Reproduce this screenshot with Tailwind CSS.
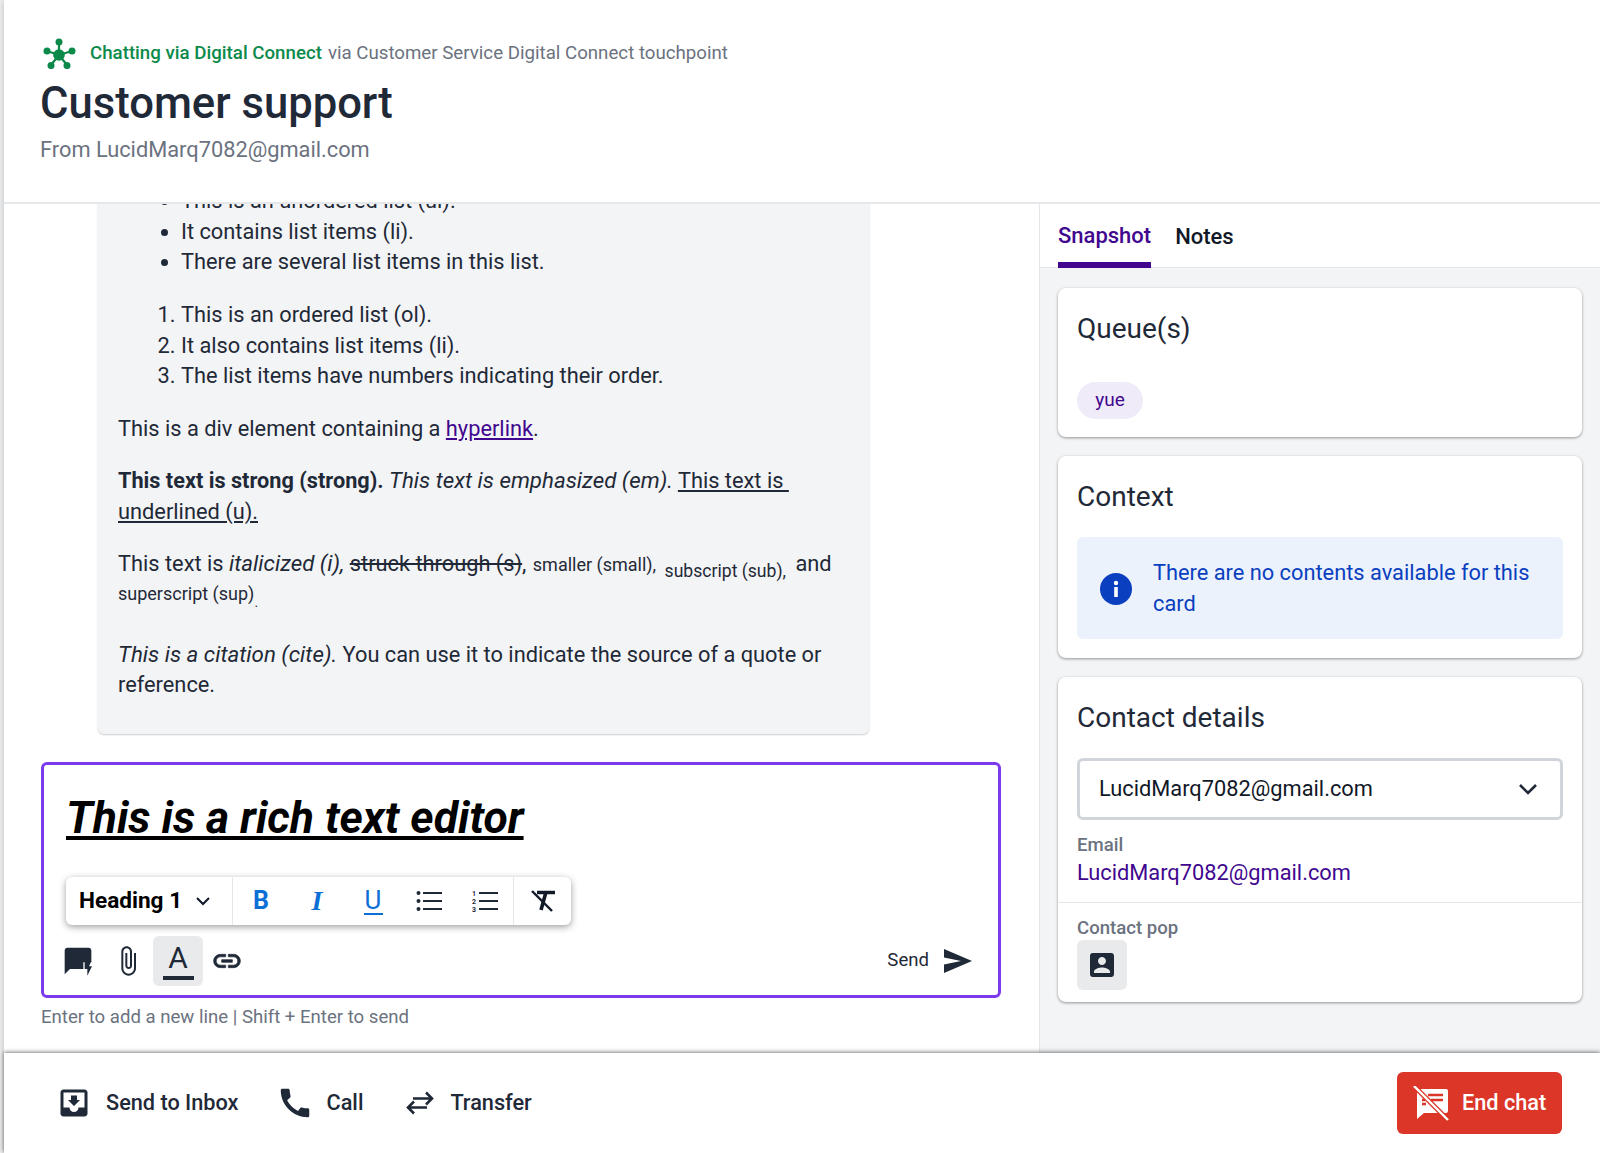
<!DOCTYPE html>
<html lang="en">
<head>
<meta charset="utf-8">
<title>Customer support</title>
<script src="https://cdn.jsdelivr.net/npm/@tailwindcss/browser@4"></script>
</head>
<body class="font-['Roboto',sans-serif] text-[#1f2937] bg-white">
<div class="w-[1600px] h-[1153px] overflow-hidden flex bg-[#f3f4f6]">
  <div class="w-[4px] shrink-0"></div>
  <div class="flex-1 min-w-0 flex flex-col bg-white shadow-[-2px_0_6px_rgba(0,0,0,0.16)]">
    <!-- Header -->
    <header class="h-[204px] shrink-0 border-b-2 border-[#e5e7eb] pl-[36px] pt-[38px]">
      <div class="h-[30px] flex items-center text-[18.7px]">
        <svg class="w-[34px] h-[32px] mr-[14px] ml-[2px] mt-[2px]" viewBox="0 0 34 32" fill="#0b8a4a" stroke="#0b8a4a">
          <g stroke-width="2.2"><path d="M17 17 L17 4 M17 17 L5 13 M17 17 L30 13 M17 17 L9 27 M17 17 L25 27"/></g>
          <g stroke="none"><circle cx="17" cy="17" r="5.8"/><circle cx="17" cy="4" r="3.5"/><circle cx="5" cy="13" r="3.5"/><circle cx="30" cy="13" r="3.5"/><circle cx="9" cy="27.5" r="3.5"/><circle cx="25" cy="27.5" r="3.5"/></g>
        </svg>
        <span class="text-[#0b8a4a] font-medium">Chatting via Digital Connect</span>
        <span class="text-[#6b7280] ml-[6px]">via Customer Service Digital Connect touchpoint</span>
      </div>
      <h1 class="mt-[10px] text-[43.6px] leading-[52px] font-medium">Customer support</h1>
      <p class="mt-[4px] text-[21.8px] leading-[32px] text-[#6b7280]">From LucidMarq7082@gmail.com</p>
    </header>

    <!-- Middle -->
    <div class="flex-1 min-h-0 flex">
      <!-- Conversation -->
      <div class="w-[1035px] shrink-0 min-h-0 overflow-hidden flex flex-col justify-end pl-[37px] pr-[38px] pb-[24px]">
        <div class="shrink-0 ml-[57px] w-[771px] bg-[#f3f4f6] rounded-b-md shadow-[0_1px_2px_rgba(0,0,0,0.2)] pl-[20px] pr-[20px] pb-[33px] text-[21.8px] leading-[30.6px]">
          <ul class="list-disc pl-[63px]">
            <li>This is an unordered list (ul).</li>
            <li>It contains list items (li).</li>
            <li>There are several list items in this list.</li>
          </ul>
          <ol class="list-decimal pl-[63px] mt-[22px]">
            <li>This is an ordered list (ol).</li>
            <li>It also contains list items (li).</li>
            <li>The list items have numbers indicating their order.</li>
          </ol>
          <p class="mt-[22px]">This is a div element containing a <a class="text-[#41078f] underline">hyperlink</a>.</p>
          <p class="mt-[21px]"><strong class="font-bold text-[21.7px]">This text is strong (strong).</strong> <em class="text-[22.3px]">This text is emphasized (em).</em> <u>This text is&nbsp;</u> <u>underlined (u).</u></p>
          <p class="mt-[20px]">This text is <i class="text-[22.3px]">italicized (i),</i> <s>struck through (s)</s>, <small class="text-[18px] ml-[1px]">smaller (small),</small> <sub class="text-[17.6px] bottom-[-6px] ml-[3px]">subscript (sub),</sub> <span class="ml-[4px]">and</span> <sup class="text-[18px] top-[-2px]">superscript (sup)</sup><span class="relative top-[5px] text-[14px]">.</span></p>
          <p class="mt-[26px]"><cite class="italic text-[22.3px]">This is a citation (cite).</cite> You can use it to indicate the source of a quote or reference.</p>
        </div>

        <!-- Editor -->
        <div class="shrink-0 mt-[28px] h-[236px] w-[960px] rounded-md border-[3px] border-[#7c3aed] flex flex-col">
          <div class="h-[112px] shrink-0 pl-[22px] pb-[6px] flex items-center">
            <span class="text-[44.5px] leading-[52px] font-bold italic underline text-black">This is a rich text editor</span>
          </div>
          <div class="ml-[22px] h-[48px] w-[505px] shrink-0 flex items-center rounded-md bg-white shadow-[0_2px_7px_rgba(0,0,0,0.38)]">
            <div class="w-[167px] h-full shrink-0 flex items-center pl-[13px] pb-[1px] border-r border-[#e5e7eb] text-[22.6px] font-bold text-black">
              <span>Heading 1</span>
              <svg class="w-[18px] h-[18px] ml-[12px]" viewBox="0 0 18 18" fill="none" stroke="#111827" stroke-width="2"><path d="M3 6l6 6 6-6"/></svg>
            </div>
            <div class="w-[56px] h-full flex items-center justify-center text-[25px] font-bold text-[#0b6fd6]">B</div>
            <div class="w-[56px] h-full flex items-center justify-center font-['Liberation_Serif',serif] text-[28px] font-bold italic text-[#0b6fd6]">I</div>
            <div class="w-[56px] h-full flex flex-col items-center justify-center text-[#0b6fd6]">
              <span class="text-[26px] leading-[24px]">U</span>
              <span class="w-[19px] h-[2px] mt-[1px] bg-[#0b6fd6]"></span>
            </div>
            <div class="w-[56px] h-full flex items-center justify-center">
              <svg class="w-[26px] h-[22px]" viewBox="0 0 26 22" fill="#1f2937"><circle cx="2.5" cy="3" r="2"/><circle cx="2.5" cy="11" r="2"/><circle cx="2.5" cy="19" r="2"/><rect x="7" y="2" width="19" height="2"/><rect x="7" y="10" width="19" height="2"/><rect x="7" y="18" width="19" height="2"/></svg>
            </div>
            <div class="w-[56px] h-full flex items-center justify-center">
              <svg class="w-[26px] h-[24px]" viewBox="0 0 26 24" fill="#1f2937"><text x="0" y="6.5" font-size="7" font-weight="700" font-family="Roboto">1</text><text x="0" y="14.5" font-size="7" font-weight="700" font-family="Roboto">2</text><text x="0" y="22.5" font-size="7" font-weight="700" font-family="Roboto">3</text><rect x="7" y="3" width="19" height="2"/><rect x="7" y="11" width="19" height="2"/><rect x="7" y="19" width="19" height="2"/></svg>
            </div>
            <div class="flex-1 h-full flex items-center justify-center border-l border-[#e5e7eb]">
              <svg class="w-[26px] h-[24px]" viewBox="0 0 26 24" fill="none" stroke="#111827"><path d="M7 3.5h18" stroke-width="3.5"/><path d="M16 3 L11 21" stroke-width="3.6"/><path d="M2 2 L22 22" stroke-width="2.4"/></svg>
            </div>
          </div>
          <div class="mt-[11px] h-[50px] shrink-0 flex items-center pl-[9px] pr-[26px]">
            <div class="w-[50px] h-[50px] flex items-center justify-center">
              <svg class="w-[32px] h-[32px]" viewBox="0 0 24 24" fill="#1f2937"><path d="M22 4c0-1.1-.9-2-2-2H4c-1.1 0-1.99.9-1.99 2L2 22l4-4h10v-5h6V4z"/><path d="M22.5 16h-2.2l1.7-4h-5v6h2v5z"/></svg>
            </div>
            <div class="w-[50px] h-[50px] flex items-center justify-center">
              <svg class="w-[32px] h-[32px]" viewBox="0 0 24 24" fill="#1f2937"><path d="M16.5 6v11.5c0 2.21-1.79 4-4 4s-4-1.79-4-4V5c0-1.38 1.12-2.5 2.5-2.5s2.5 1.12 2.5 2.5v10.5c0 .55-.45 1-1 1s-1-.45-1-1V6H10v9.5c0 1.38 1.12 2.5 2.5 2.5s2.5-1.12 2.5-2.5V5c0-2.21-1.79-4-4-4S7 2.79 7 5v12.5c0 3.04 2.46 5.5 5.5 5.5s5.5-2.46 5.5-5.5V6h-1.5z"/></svg>
            </div>
            <div class="w-[50px] h-[50px] flex flex-col items-center justify-center rounded-md bg-[#e9eaec]">
              <span class="text-[30px] leading-[30px]">A</span>
              <span class="w-[31px] h-[4px] mt-[3px] bg-[#1f2937]"></span>
            </div>
            <div class="w-[50px] h-[50px] -ml-[1px] flex items-center justify-center">
              <svg class="w-[32px] h-[32px]" viewBox="0 0 24 24" fill="#1f2937" stroke="#1f2937" stroke-width="0.5"><path d="M3.9 12c0-1.71 1.39-3.1 3.1-3.1h4V7H7c-2.76 0-5 2.24-5 5s2.24 5 5 5h4v-1.9H7c-1.71 0-3.1-1.39-3.1-3.1zM8 13h8v-2H8v2zm9-6h-4v1.9h4c1.71 0 3.1 1.39 3.1 3.1s-1.39 3.1-3.1 3.1h-4V17h4c2.76 0 5-2.24 5-5s-2.24-5-5-5z"/></svg>
            </div>
            <div class="ml-auto flex items-center text-[18.6px]">
              <span>Send</span>
              <svg class="w-[28px] h-[24px] ml-[15px]" viewBox="0 0 28 24" fill="#1f2937"><path d="M0 0 L28 12 L0 24 L0 15.5 L17 12 L0 8.5z"/></svg>
            </div>
          </div>
        </div>
        <p class="shrink-0 mt-[7px] text-[18.6px] leading-[24px] text-[#6b7280]">Enter to add a new line | Shift + Enter to send</p>
      </div>

      <!-- Right panel -->
      <aside class="flex-1 min-w-0 bg-[#f3f4f6] border-l border-[#e5e7eb]">
        <div class="h-[64px] bg-white border-b border-[#e5e7eb] flex pl-[18px] gap-[24px] text-[22px] font-medium">
          <div class="h-[64px] border-b-[6px] border-[#41078f] text-[#41078f] flex items-center pt-[4px]">Snapshot</div>
          <div class="h-[64px] flex items-center text-[#111827]">Notes</div>
        </div>
        <div class="ml-[18px] mr-[18px] mt-[20px] flex flex-col gap-[19px]">
          <section class="h-[149px] bg-white rounded-lg shadow-[0_1px_3px_rgba(0,0,0,0.4)] px-[19px] pt-[21px]">
            <h2 class="text-[28px] leading-[40px]">Queue(s)</h2>
            <span class="mt-[33px] flex items-center justify-center w-[66px] h-[37px] rounded-full bg-[#f0ebf8] text-[#41078f] text-[19px]">yue</span>
          </section>
          <section class="h-[202px] bg-white rounded-lg shadow-[0_1px_3px_rgba(0,0,0,0.4)] px-[19px] pt-[21px]">
            <h2 class="text-[28px] leading-[40px]">Context</h2>
            <div class="mt-[20px] h-[102px] rounded-md bg-[#ecf2fb] flex items-center pl-[23px] pr-[20px] gap-[21px] text-[#0a3fbf] text-[21.8px] leading-[31px]">
              <svg class="w-[32px] h-[32px] shrink-0 mt-[1px]" viewBox="0 0 32 32"><circle cx="16" cy="16" r="16" fill="#0a3fbf"/><rect x="14.2" y="14" width="3.6" height="10" fill="#fff"/><circle cx="16" cy="10" r="2.2" fill="#fff"/></svg>
              <p>There are no contents available for this card</p>
            </div>
          </section>
          <section class="h-[325px] bg-white rounded-lg shadow-[0_1px_3px_rgba(0,0,0,0.4)]">
            <div class="px-[19px] pt-[21px] pb-[14px] border-b border-[#e5e7eb]">
              <h2 class="text-[28px] leading-[40px]">Contact details</h2>
              <div class="mt-[20px] h-[62px] rounded-md border-[3px] border-[#d1d5db] flex items-center pl-[19px] pr-[22px] text-[21.8px] text-[#111827]">
                <span>LucidMarq7082@gmail.com</span>
                <svg class="ml-auto w-[20px] h-[20px]" viewBox="0 0 20 20" fill="none" stroke="#1f2937" stroke-width="2.6"><path d="M2 6l8 8 8-8"/></svg>
              </div>
              <p class="mt-[13px] text-[18.6px] leading-[24px] font-medium text-[#6b7280]">Email</p>
              <a class="block mt-[1px] text-[21.8px] leading-[30px] text-[#41078f]">LucidMarq7082@gmail.com</a>
            </div>
            <div class="px-[19px] pt-[13px]">
              <p class="text-[18.6px] leading-[24px] font-medium text-[#6b7280]">Contact pop</p>
              <div class="w-[50px] h-[50px] rounded-md bg-[#e9eaec] flex items-center justify-center">
                <svg class="w-[32px] h-[32px]" viewBox="0 0 24 24" fill="#1f2937"><path d="M3 5v14c0 1.1.89 2 2 2h14c1.1 0 2-.9 2-2V5c0-1.1-.9-2-2-2H5c-1.11 0-2 .9-2 2zm12 4c0 1.66-1.34 3-3 3s-3-1.34-3-3 1.34-3 3-3 3 1.34 3 3zm-9 8c0-2 4-3.1 6-3.1s6 1.1 6 3.1v1H6v-1z"/></svg>
              </div>
            </div>
          </section>
        </div>
      </aside>
    </div>

    <!-- Footer -->
    <footer class="relative h-[100px] shrink-0 bg-white shadow-[0_-1px_4px_rgba(0,0,0,0.5)] flex items-center pl-[52px] pr-[38px] text-[21.7px] font-medium">
      <svg class="w-[36px] h-[36px]" viewBox="0 0 24 24" fill="#1f2937"><path d="M19 3H4.99c-1.11 0-1.98.9-1.98 2L3 19c0 1.1.88 2 1.99 2H19c1.1 0 2-.9 2-2V5c0-1.1-.9-2-2-2zm0 12h-4c0 1.66-1.35 3-3 3s-3-1.34-3-3H4.99V5H19v10zm-3-5h-2V7h-4v3H8l4 4 4-4z"/></svg>
      <span class="ml-[14px]">Send to Inbox</span>
      <svg class="ml-[37px] w-[38px] h-[38px]" viewBox="0 0 24 24" fill="#1f2937"><path d="M20.01 15.38c-1.23 0-2.42-.2-3.53-.56-.35-.12-.74-.03-1.01.24l-1.57 1.97c-2.83-1.35-5.48-3.9-6.89-6.83l1.95-1.66c.27-.28.35-.67.24-1.02-.37-1.11-.56-2.3-.56-3.53 0-.54-.45-.99-.99-.99H4.19C3.65 3 3 3.24 3 3.99 3 13.28 10.73 21 20.01 21c.71 0 .99-.63.99-1.18v-3.45c0-.54-.45-.99-.99-.99z"/></svg>
      <span class="ml-[13px]">Call</span>
      <svg class="ml-[42px] w-[30px] h-[24px]" viewBox="0 0 30 24" fill="none" stroke="#1f2937" stroke-width="2.6"><path d="M4 16.5h18M9 10.5l-6 6 6 6M8 7.5h19M21 1.5l6 6-6 6"/></svg>
      <span class="ml-[15px]">Transfer</span>
      <button class="ml-auto w-[165px] h-[62px] rounded-md bg-[#dc3628] text-white flex items-center pl-[16px]">
        <svg class="w-[36px] h-[36px] shrink-0 mt-[2px]" viewBox="0 0 36 36"><path d="M6 3H33a2 2 0 0 1 2 2V25a2 2 0 0 1-2 2H11L4 33V5a2 2 0 0 1 2-2z" fill="#fff"/><path d="M15 9H30M18 14H30M9 18H13M9 14H12" stroke="#dc3628" stroke-width="2.4"/><path d="M1 0L35 34" stroke="#dc3628" stroke-width="5"/><path d="M1 0L35 34" stroke="#fff" stroke-width="2.4"/></svg>
        <span class="ml-[13px]">End chat</span>
      </button>
    </footer>
  </div>
</div>
</body>
</html>
